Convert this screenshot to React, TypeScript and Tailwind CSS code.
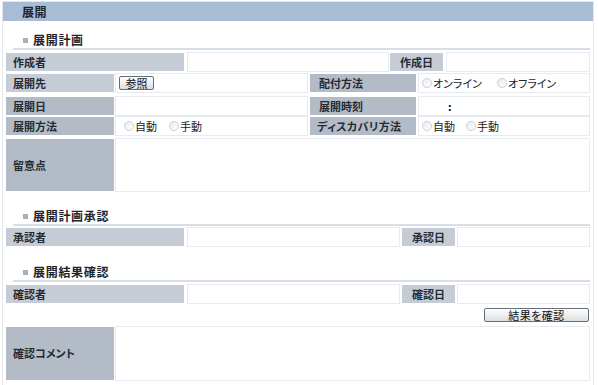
import type { ReactNode } from "react";

type CellProps = { children?: ReactNode; className?: string };

function Label({ children, className = "", dark = false }: CellProps & { dark?: boolean }) {
  return (
    <div
      className={`flex h-[18px] shrink-0 items-center text-[11px] font-bold leading-none text-[#262b32] ${
        dark ? "bg-[#b3bbc6]" : "bg-[#c6ccd6]"
      } ${className}`}
    >
      {children}
    </div>
  );
}

function Value({ children, className = "" }: CellProps) {
  return (
    <div className={`flex h-full items-center border border-[#e6ebf1] bg-white ${className}`}>
      {children}
    </div>
  );
}

function Radio({ label }: { label: string }) {
  return (
    <span className="flex items-center">
      <span className="h-[10px] w-[10px] rounded-full border border-[#cbcfd4] bg-gradient-to-br from-[#e9ebee] to-white" />
      <span className="ml-px text-[11px] leading-none text-[#222]">{label}</span>
    </span>
  );
}

function Heading({ children, className = "" }: CellProps) {
  return (
    <div className={`ml-[7px] flex items-end border-b-2 border-[#d8dee6] pb-px ${className}`}>
      <span className="ml-[10px] mr-[5px] mb-[4px] h-[5px] w-[5px] bg-[#a9afb8]" />
      <span className="text-[12px] font-bold leading-[14px] tracking-[0.7px] text-[#1f242b]">{children}</span>
    </div>
  );
}

function Button({ children, className = "" }: CellProps) {
  return (
    <button
      type="button"
      className={`flex items-center justify-center rounded-[2px] border border-[#646d7a] bg-gradient-to-b from-white to-[#dcdee2] text-[11px] leading-none text-[#111] ${className}`}
    >
      {children}
    </button>
  );
}

export default function App() {
  return (
    <div className="h-[385px] w-[598px] overflow-hidden bg-white font-['Noto_Sans_CJK_JP',sans-serif] [font-feature-settings:'palt']">
      <div className="ml-[2px] mt-px flex h-[384px] w-[592px] flex-col border-x border-t border-[#e2e7ec]">
        {/* title bar */}
        <div className="flex h-[19px] shrink-0 items-center bg-[#a8bcd6] pl-[19px] text-[12px] font-bold tracking-[0.5px] text-[#1c2430]">
          展開
        </div>

        <div className="flex flex-col px-[3px]">
          {/* 展開計画 */}
          <Heading className="-ml-[3px] h-[29px]">展開計画</Heading>

          <div className="mt-[2px] flex h-[20px] items-center">
            <Label className="w-[178px] pl-[7px]">作成者</Label>
            <Value className="ml-[3px] w-[202px]" />
            <Label className="ml-px w-[53px] justify-center">作成日</Label>
            <Value className="ml-[3px] flex-1" />
          </div>

          <div className="mt-px flex h-[20px] items-center">
            <Label className="w-[108px] pl-[7px]">展開先</Label>
            <Value className="ml-px w-[193px] pl-[3px]">
              <Button className="h-[14px] w-[35px]">参照</Button>
            </Value>
            <Label dark className="ml-[2px] w-[106px] pl-[9px]">配付方法</Label>
            <Value className="ml-[2px] flex-1 gap-[15px] pl-[3px]">
              <Radio label="オンライン" />
              <Radio label="オフライン" />
            </Value>
          </div>

          <div className="mt-[3px] flex h-[20px] items-center">
            <Label dark className="w-[108px] pl-[7px]">展開日</Label>
            <Value className="ml-px w-[193px]" />
            <Label dark className="ml-[2px] w-[106px] pl-[9px]">展開時刻</Label>
            <Value className="ml-[2px] flex-1 pl-[29px] text-[11px] font-bold">:</Value>
          </div>

          <div className="flex h-[20px] items-center">
            <Label dark className="w-[108px] pl-[7px]">展開方法</Label>
            <Value className="ml-px w-[193px] gap-[12px] pl-[8px]">
              <Radio label="自動" />
              <Radio label="手動" />
            </Value>
            <Label dark className="ml-[2px] w-[106px] pl-[7px] tracking-[0.4px]">ディスカバリ方法</Label>
            <Value className="ml-[2px] flex-1 gap-[11px] pl-[3px]">
              <Radio label="自動" />
              <Radio label="手動" />
            </Value>
          </div>

          <div className="mt-[2px] flex h-[54px] items-center">
            <Label dark className="h-[52px] w-[108px] pl-[7px]">留意点</Label>
            <Value className="ml-px flex-1" />
          </div>

          {/* 展開計画承認 */}
          <Heading className="-ml-[3px] h-[34px]">展開計画承認</Heading>

          <div className="mt-px flex h-[20px] items-center">
            <Label className="w-[178px] pl-[7px]">承認者</Label>
            <Value className="ml-[3px] w-[213px]" />
            <Label className="ml-[2px] w-[53px] justify-center">承認日</Label>
            <Value className="ml-[2px] flex-1" />
          </div>

          {/* 展開結果確認 */}
          <Heading className="-ml-[3px] h-[35px]">展開結果確認</Heading>

          <div className="mt-[2px] flex h-[20px] items-center">
            <Label className="w-[178px] pl-[7px]">確認者</Label>
            <Value className="ml-[3px] w-[213px]" />
            <Label className="ml-[2px] w-[53px] justify-center">確認日</Label>
            <Value className="ml-[2px] flex-1" />
          </div>

          <div className="mt-[4px] flex h-[14px] justify-end pr-px">
            <Button className="h-[14px] w-[105px] tracking-[0.5px]">結果を確認</Button>
          </div>

          <div className="mt-[4px] flex h-[55px] items-center">
            <Label dark className="h-[53px] w-[108px] pl-[7px]">確認コメント</Label>
            <Value className="ml-px flex-1" />
          </div>
        </div>
      </div>
    </div>
  );
}
